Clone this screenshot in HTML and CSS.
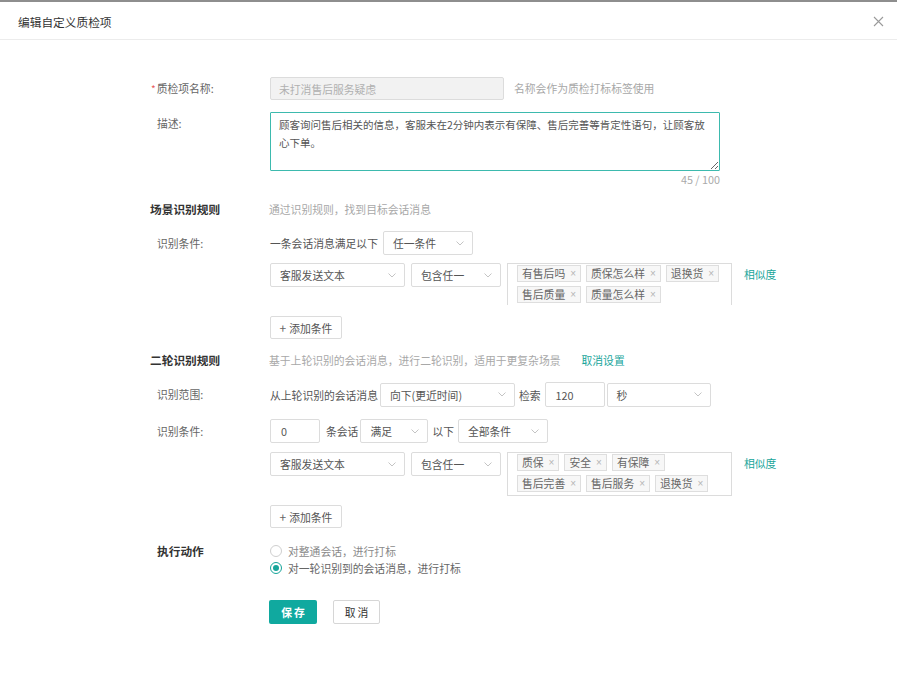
FILE: index.html
```html
<!DOCTYPE html>
<html lang="zh">
<head>
<meta charset="utf-8">
<title>编辑自定义质检项</title>
<link rel="stylesheet" href="styles.css">
</head>
<body>
<div class="topline"></div>
<div class="header">
  <span class="title">编辑自定义质检项</span>
  <svg class="close" width="11" height="11" viewBox="0 0 11 11"><path d="M1 1L10 10M10 1L1 10" stroke="#9a9a9a" stroke-width="1.1" fill="none"/></svg>
</div>
<div class="form">
  <div class="row r-name">
    <div class="label"><span class="req">*</span>质检项名称:</div>
    <div class="input disabled w-name">未打消售后服务疑虑</div>
    <span class="hint gap10">名称会作为质检打标标签使用</span>
  </div>

  <div class="row r-desc">
    <div class="label">描述:</div>
    <div class="desc-wrap">
      <textarea class="textarea">顾客询问售后相关的信息，客服未在2分钟内表示有保障、售后完善等肯定性语句，让顾客放心下单。</textarea>
      <div class="counter">45 / 100</div>
    </div>
  </div>

  <div class="row r-sec1 section">
    <div class="sec-title">场景识别规则</div>
    <span class="hint">通过识别规则，找到目标会话消息</span>
  </div>

  <div class="row r-cond1 center">
    <div class="label">识别条件:</div>
    <span class="text">一条会话消息满足以下</span>
    <div class="select w90 gap5"><span>任一条件</span><svg width="8" height="5" viewBox="0 0 8 5"><path d="M0.5 0.5L4 4L7.5 0.5" stroke="#c4c4c4" fill="none"/></svg></div>
  </div>

  <div class="row r-rule1">
    <div class="label"></div>
    <div class="select w135"><span>客服发送文本</span><svg width="8" height="5" viewBox="0 0 8 5"><path d="M0.5 0.5L4 4L7.5 0.5" stroke="#c4c4c4" fill="none"/></svg></div>
    <div class="select w90 gap6"><span>包含任一</span><svg width="8" height="5" viewBox="0 0 8 5"><path d="M0.5 0.5L4 4L7.5 0.5" stroke="#c4c4c4" fill="none"/></svg></div>
    <div class="tags open gap6">
      <span class="tag">有售后吗<i>×</i></span>
      <span class="tag">质保怎么样<i>×</i></span>
      <span class="tag">退换货<i>×</i></span>
      <span class="tag">售后质量<i>×</i></span>
      <span class="tag">质量怎么样<i>×</i></span>
    </div>
    <a class="link sim">相似度</a>
  </div>

  <div class="row r-add1">
    <div class="label"></div>
    <div class="btn-add"><span class="plus">+</span>添加条件</div>
  </div>

  <div class="row r-sec2 section">
    <div class="sec-title">二轮识别规则</div>
    <span class="hint">基于上轮识别的会话消息，进行二轮识别，适用于更复杂场景</span>
    <a class="link cancel-set">取消设置</a>
  </div>

  <div class="row r-range center">
    <div class="label">识别范围:</div>
    <span class="text">从上轮识别的会话消息</span>
    <div class="select w135 gap2 h25"><span>向下(更近时间)</span><svg width="8" height="5" viewBox="0 0 8 5"><path d="M0.5 0.5L4 4L7.5 0.5" stroke="#c4c4c4" fill="none"/></svg></div>
    <span class="text gap4">检索</span>
    <div class="input w60 gap4 h25">120</div>
    <div class="select w104 gap2 h25"><span>秒</span><svg width="8" height="5" viewBox="0 0 8 5"><path d="M0.5 0.5L4 4L7.5 0.5" stroke="#c4c4c4" fill="none"/></svg></div>
  </div>

  <div class="row r-cond2 center">
    <div class="label">识别条件:</div>
    <div class="input w50">0</div>
    <span class="text gap6">条会话</span>
    <div class="select w68 gap2"><span>满足</span><svg width="8" height="5" viewBox="0 0 8 5"><path d="M0.5 0.5L4 4L7.5 0.5" stroke="#c4c4c4" fill="none"/></svg></div>
    <span class="text gap4">以下</span>
    <div class="select w90 gap4"><span>全部条件</span><svg width="8" height="5" viewBox="0 0 8 5"><path d="M0.5 0.5L4 4L7.5 0.5" stroke="#c4c4c4" fill="none"/></svg></div>
  </div>

  <div class="row r-rule2">
    <div class="label"></div>
    <div class="select w135"><span>客服发送文本</span><svg width="8" height="5" viewBox="0 0 8 5"><path d="M0.5 0.5L4 4L7.5 0.5" stroke="#c4c4c4" fill="none"/></svg></div>
    <div class="select w90 gap6"><span>包含任一</span><svg width="8" height="5" viewBox="0 0 8 5"><path d="M0.5 0.5L4 4L7.5 0.5" stroke="#c4c4c4" fill="none"/></svg></div>
    <div class="tags closed gap6">
      <span class="tag">质保<i>×</i></span>
      <span class="tag">安全<i>×</i></span>
      <span class="tag">有保障<i>×</i></span>
      <span class="tag">售后完善<i>×</i></span>
      <span class="tag">售后服务<i>×</i></span>
      <span class="tag">退换货<i>×</i></span>
    </div>
    <a class="link sim">相似度</a>
  </div>

  <div class="row r-add2">
    <div class="label"></div>
    <div class="btn-add"><span class="plus">+</span>添加条件</div>
  </div>

  <div class="row r-action">
    <div class="label act-title">执行动作</div>
    <div class="radios">
      <label class="radio"><span class="circle"></span>对整通会话，进行打标</label>
      <label class="radio"><span class="circle checked"></span>对一轮识别到的会话消息，进行打标</label>
    </div>
  </div>

  <div class="row r-btns">
    <div class="label"></div>
    <div class="btn primary">保存</div>
    <div class="btn default">取消</div>
  </div>
</div>
</body>
</html>
```

FILE: styles.css
```css
* { box-sizing: border-box; }
html, body { margin: 0; padding: 0; background: #fff; }
body {
  font-family: "Noto Sans CJK SC", "Noto Sans", "Liberation Sans", sans-serif;
  font-size: 10.8px;
  color: #555;
  width: 897px;
  height: 680px;
  overflow: hidden;
}
.topline { height: 2px; background: #8e8e8e; }
.header {
  height: 38px;
  border-bottom: 1px solid #ececec;
  display: flex;
  align-items: center;
  justify-content: space-between;
  padding: 0 13px 0 18px;
}
.title { font-size: 11.7px; color: #333; font-weight: 400; padding-top: 1px; }
.close { margin-top: 2px; }

.form { padding-left: 150px; padding-top: 37px; }
.row { display: flex; align-items: flex-start; }
.row.center { align-items: center; }
.label {
  width: 120px;
  flex: none;
  padding-left: 7px;
  color: #666;
  line-height: 23px;
  white-space: nowrap;
}
.req { color: #e85a5a; margin-left: -6px; margin-right: 1px; font-size: 10px; }
.text { color: #555; white-space: nowrap; }
.hint { color: #a8a8a8; white-space: nowrap; }

.gap2 { margin-left: 2px; }
.gap3 { margin-left: 3px; }
.gap4 { margin-left: 4px; }
.gap5 { margin-left: 5px; }
.gap6 { margin-left: 6px; }
.gap10 { margin-left: 10px; line-height: 23px; }

.input {
  height: 24px;
  border: 1px solid #dcdcdc;
  border-radius: 2px;
  padding-left: 10px;
  display: flex;
  align-items: center;
  color: #555;
  background: #fff;
}
.input.disabled { background: #f2f2f2; color: #b0b0b0; padding-left: 8px; }
.w-name { width: 234px; height: 23px; }
.w60 { width: 60px; }
.w50 { width: 50px; }
.w90 { width: 90px; }
.w135 { width: 135px; }
.w104 { width: 104px; }
.w68 { width: 68px; }
.h25 { height: 25px; }

.select {
  height: 24px;
  border: 1px solid #dcdcdc;
  border-radius: 2px;
  display: flex;
  align-items: center;
  justify-content: space-between;
  padding: 0 8px 0 9px;
  color: #555;
  background: #fff;
  flex: none;
}
.select svg { flex: none; }

.r-name { margin-top: 0; }
.r-desc { margin-top: 12px; }
.desc-wrap { width: 450px; }
.textarea {
  display: block;
  width: 450px;
  height: 59px;
  border: 1px solid #3dbaae;
  border-radius: 1px;
  padding: 3px 8px;
  font-family: "Noto Sans CJK SC", "Noto Sans", sans-serif;
  font-size: 10.5px;
  line-height: 18px;
  color: #555;
  outline: none;
  resize: vertical;
}
.counter { text-align: right; color: #aaa; line-height: 14px; margin-top: 1px; }

.section { align-items: center; }
.sec-title {
  width: 119px;
  flex: none;
  font-size: 11.7px;
  font-weight: 700;
  color: #333;
  line-height: 18px;
}
.r-sec1 { margin-top: 14px; }
.r-cond1 { margin-top: 13px; }
.r-rule1 { margin-top: 8px; }
.r-add1 { margin-top: 11px; }
.r-sec2 { margin-top: 12px; }
.r-range { margin-top: 13px; }
.r-cond2 { margin-top: 12px; }
.r-rule2 { margin-top: 9px; }
.r-add2 { margin-top: 9px; }
.r-action { margin-top: 14px; }
.r-btns { margin-top: 24px; }

.tags {
  width: 225px;
  flex: none;
  border: 1px solid #dcdcdc;
  padding: 1px 6px 0 9px;
  display: flex;
  flex-wrap: wrap;
  gap: 4px 5px;
  align-content: flex-start;
}
.tags.open { height: 42px; border-bottom: none; }
.tags.closed { height: 44px; }
.tag {
  height: 17px;
  border: 1px solid #dedede;
  background: #f7f7f7;
  color: #666;
  padding: 0 4px 0 4px;
  display: inline-flex;
  align-items: center;
  white-space: nowrap;
  line-height: 15px;
}
.tag i {
  font-style: normal;
  font-family: "Liberation Sans", "DejaVu Sans", sans-serif;
  color: #b5b5b5;
  margin-left: 5px;
  font-size: 10px;
}

.link { color: #17a59a; text-decoration: none; white-space: nowrap; }
.sim { margin-left: 12px; line-height: 22px; }
.cancel-set { margin-left: 21px; }

.btn-add {
  width: 72px;
  height: 23px;
  border: 1px solid #dcdcdc;
  border-radius: 2px;
  display: flex;
  align-items: center;
  justify-content: center;
  color: #555;
}
.plus { font-size: 12px; margin-right: 3px; color: #666; }

.act-title { font-weight: 700; color: #333; font-size: 11.7px; line-height: 17px; }
.radios { display: flex; flex-direction: column; }
.radio { display: flex; align-items: center; height: 17px; color: #8a8a8a; white-space: nowrap; }
.radio:nth-child(2) { color: #666; }
.circle {
  width: 12px; height: 12px;
  border: 1px solid #cfcfcf;
  border-radius: 50%;
  margin-right: 6px;
  position: relative;
  background: #fff;
}
.circle.checked { border-color: #17a59a; }
.circle.checked::after {
  content: "";
  position: absolute;
  left: 2px; top: 2px;
  width: 6px; height: 6px;
  border-radius: 50%;
  background: #17a59a;
}

.btn {
  height: 24px;
  display: flex;
  align-items: center;
  justify-content: center;
  border-radius: 2px;
}
.primary {
  width: 48px;
  margin-left: -1px;
  background: #10a99f;
  color: #fff;
  font-weight: 700;
  letter-spacing: 2px;
  padding-left: 2px;
}
.default {
  width: 47px;
  margin-left: 16px;
  border: 1px solid #d6d6d6;
  color: #333;
  letter-spacing: 2px;
  padding-left: 2px;
}
```
